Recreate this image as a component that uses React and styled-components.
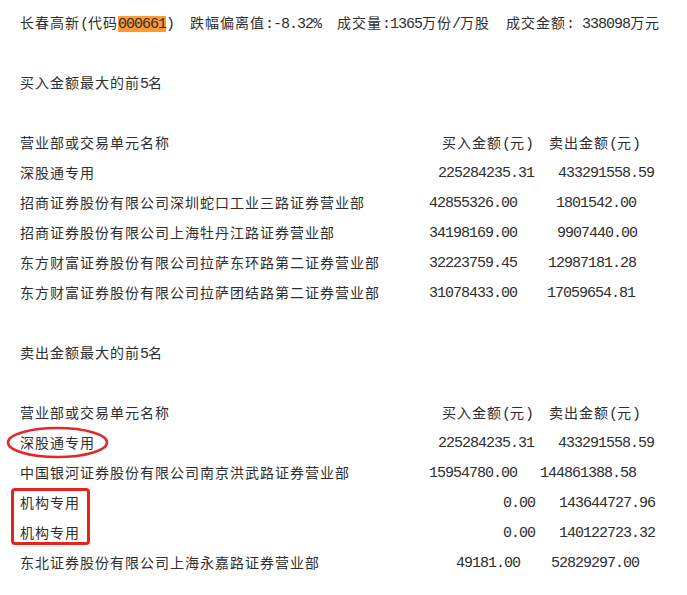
import styled, { createGlobalStyle } from 'styled-components';

const GlobalStyle = createGlobalStyle`
  html, body {
    margin: 0;
    padding: 0;
    background: #ffffff;
  }
`;

const topBuyers = [
  { name: '深股通专用', buy: '225284235.31', bp: 10, sell: '433291558.59', sp: 22 },
  { name: '招商证券股份有限公司深圳蛇口工业三路证券营业部', buy: '42855326.00', bp: 1, sell: '1801542.00', sp: 20 },
  { name: '招商证券股份有限公司上海牡丹江路证券营业部', buy: '34198169.00', bp: 1, sell: '9907440.00', sp: 21 },
  { name: '东方财富证券股份有限公司拉萨东环路第二证券营业部', buy: '32223759.45', bp: 1, sell: '12987181.28', sp: 12 },
  { name: '东方财富证券股份有限公司拉萨团结路第二证券营业部', buy: '31078433.00', bp: 1, sell: '17059654.81', sp: 11 },
];

const Row = ({ row, circled }) => (
  <Line>
    <Name>
      <Cjk>{row.name}</Cjk>
      {circled && (
        <Circle viewBox="0 0 103 33" aria-hidden="true">
          <ellipse cx="51.5" cy="16.5" rx="49.5" ry="14.5" fill="none" stroke="#e5262b" strokeWidth="2.6" />
        </Circle>
      )}
    </Name>
    <Cell $pad={row.bp}><Mono>{row.buy}</Mono></Cell>
    <Cell $pad={row.sp}><Mono>{row.sell}</Mono></Cell>
  </Line>
);

const Header = () => (
  <Line>
    <Name><Cjk>营业部或交易单元名称</Cjk></Name>
    <Cell $pad={14}><Cjk>买入金额</Cjk><Mono>(</Mono><Cjk>元</Cjk><Mono>)</Mono></Cell>
    <Cell $pad={13}><Cjk>卖出金额</Cjk><Mono>(</Mono><Cjk>元</Cjk><Mono>)</Mono></Cell>
  </Line>
);

const App = () => {
  return (
    <Page>
      <GlobalStyle />
      <Title>
        <Cjk>长春高新</Cjk><Mono>(</Mono><Cjk>代码</Cjk><Mark>000661</Mark><Mono>)  </Mono>
        <Cjk>跌幅偏离值</Cjk><Mono>:-8.32%  </Mono>
        <Cjk>成交量</Cjk><Mono>:1365</Mono><Cjk>万份</Cjk><Mono>/</Mono><Cjk>万股</Cjk><Mono>  </Mono>
        <Cjk>成交金额</Cjk><Mono>: 338098</Mono><Cjk>万元</Cjk>
      </Title>

      <Section>
        <SectionTitle><Cjk>买入金额最大的前</Cjk><Mono>5</Mono><Cjk>名</Cjk></SectionTitle>
        <Header />
        {topBuyers.map((r, i) => <Row key={i} row={r} />)}
      </Section>

      <Section>
        <SectionTitle><Cjk>卖出金额最大的前</Cjk><Mono>5</Mono><Cjk>名</Cjk></SectionTitle>
        <Header />
        <Row circled row={{ name: '深股通专用', buy: '225284235.31', bp: 10, sell: '433291558.59', sp: 22 }} />
        <Row row={{ name: '中国银河证券股份有限公司南京洪武路证券营业部', buy: '15954780.00', bp: 1, sell: '144861388.58', sp: 4 }} />
        <Boxed>
          <Row row={{ name: '机构专用', buy: '0.00', bp: 75, sell: '143644727.96', sp: 23 }} />
          <Row row={{ name: '机构专用', buy: '0.00', bp: 75, sell: '140122723.32', sp: 23 }} />
        </Boxed>
        <Row row={{ name: '东北证券股份有限公司上海永嘉路证券营业部', buy: '49181.00', bp: 28, sell: '52829297.00', sp: 15 }} />
      </Section>
    </Page>
  );
};

const Page = styled.div`
  width: 687px;
  box-sizing: border-box;
  padding: 7px 0 0 20px;
  color: #2e2e2e;
  background: #ffffff;
`;

const Title = styled.div`
  height: 30px;
  line-height: 30px;
  white-space: pre;
`;

const Line = styled.div`
  display: grid;
  grid-template-columns: 408px 108px 1fr;
  height: 30px;
  line-height: 30px;
  white-space: pre;
`;

const Section = styled.section`
  padding-top: 30px;
`;

const SectionTitle = styled.div`
  height: 30px;
  line-height: 30px;
  margin-bottom: 30px;
  white-space: pre;
`;

const Name = styled.div`
  position: relative;
`;

const Cell = styled.div`
  padding-left: ${(p) => p.$pad}px;
`;

const Cjk = styled.span`
  font-family: "Noto Sans CJK SC", "Noto Sans", sans-serif;
  font-size: 14px;
  letter-spacing: 1px;
`;

const Mono = styled.span`
  font-family: "Liberation Mono", "DejaVu Sans Mono", monospace;
  font-size: 15px;
  letter-spacing: -1px;
`;

const Mark = styled(Mono)`
  display: inline-block;
  height: 16px;
  line-height: 17px;
  background: #ff9a33;
`;

const Circle = styled.svg`
  position: absolute;
  left: -14px;
  top: -1px;
  width: 103px;
  height: 33px;
  pointer-events: none;
`;

const Boxed = styled.div`
  position: relative;

  &::after {
    content: '';
    position: absolute;
    left: -9px;
    top: 1px;
    width: 79px;
    height: 57px;
    box-sizing: border-box;
    border: 3px solid #e8221d;
    border-radius: 4px;
    pointer-events: none;
  }
`;

export default App;
